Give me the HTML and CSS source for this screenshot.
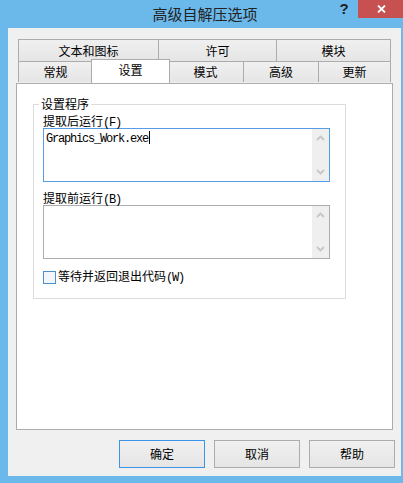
FILE: index.html
```html
<!DOCTYPE html>
<html lang="zh-CN">
<head>
<meta charset="utf-8">
<title>高级自解压选项</title>
<link rel="stylesheet" href="styles.css">
</head>
<body>
<div class="window">
  <div class="titlebar">
    <div class="title">高级自解压选项</div>
    <div class="help">?</div>
    <div class="close">
      <svg width="9" height="8" viewBox="0 0 9 8"><path d="M1 0.5 L8 7.5 M8 0.5 L1 7.5" stroke="#fff" stroke-width="1.8" fill="none"/></svg>
    </div>
  </div>
  <div class="client">
    <div class="tabs">
      <div class="tabrow">
        <div class="tab t-text">文本和图标</div>
        <div class="tab t-license">许可</div>
        <div class="tab t-module">模块</div>
      </div>
      <div class="tabrow">
        <div class="tab t-general">常规</div>
        <div class="tab t-setup active">设置</div>
        <div class="tab t-mode">模式</div>
        <div class="tab t-adv">高级</div>
        <div class="tab t-update">更新</div>
      </div>
    </div>
    <div class="panel">
      <fieldset class="group">
        <legend>设置程序</legend>
        <div class="label">提取后运行<span class="mono">(F)</span></div>
        <div class="textbox focused">
          <div class="textcontent">Graphics_Work.exe<span class="caret"></span></div>
          <div class="scrollbar">
            <svg width="9" height="6" viewBox="0 0 9 6"><polyline points="1,5 4.5,1.5 8,5" stroke="#c6c6c6" stroke-width="1.8" fill="none"/></svg>
            <svg width="9" height="6" viewBox="0 0 9 6"><polyline points="1,1 4.5,4.5 8,1" stroke="#c6c6c6" stroke-width="1.8" fill="none"/></svg>
          </div>
        </div>
        <div class="label label-gap">提取前运行<span class="mono">(B)</span></div>
        <div class="textbox">
          <div class="textcontent"></div>
          <div class="scrollbar">
            <svg width="9" height="6" viewBox="0 0 9 6"><polyline points="1,5 4.5,1.5 8,5" stroke="#c6c6c6" stroke-width="1.8" fill="none"/></svg>
            <svg width="9" height="6" viewBox="0 0 9 6"><polyline points="1,1 4.5,4.5 8,1" stroke="#c6c6c6" stroke-width="1.8" fill="none"/></svg>
          </div>
        </div>
        <div class="check-row">
          <span class="checkbox"></span>
          <span class="check-label">等待并返回退出代码<span class="mono">(W)</span></span>
        </div>
      </fieldset>
    </div>
    <div class="buttons">
      <div class="btn default">确定</div>
      <div class="btn">取消</div>
      <div class="btn">帮助</div>
    </div>
  </div>
</div>
</body>
</html>
```
FILE: styles.css
```css
* { box-sizing: border-box; }
html, body {
  margin: 0;
  padding: 0;
}
body {
  font-family: "Noto Sans CJK SC", "Noto Sans", sans-serif;
  font-size: 12px;
  color: #000;
  background: #6bb9eb;
}
.window {
  width: 403px;
  height: 483px;
  background: #6bb9eb;
  overflow: hidden;
}
.titlebar {
  display: flex;
  align-items: flex-start;
  height: 28px;
}
.title {
  flex: 1;
  padding-left: 80px;
  text-align: center;
  font-size: 15px;
  line-height: 28px;
  color: #222;
}
.help {
  width: 28px;
  height: 18px;
  text-align: center;
  font-family: "Liberation Sans", Arial, sans-serif;
  font-weight: bold;
  font-size: 15px;
  line-height: 17px;
  color: #1e1e1e;
}
.close {
  width: 45px;
  height: 18px;
  background: #c75050;
  display: flex;
  align-items: center;
  justify-content: center;
  padding-left: 1px;
}
.close svg { display: block; }

.client {
  margin-left: 8px;
  width: 393px;
  height: 448px;
  background: #f0f0f0;
  padding: 11px 8px 0 8px;
}
.tabs {
  padding-left: 2px;
}
.tabrow {
  display: flex;
}
.tab {
  border: 1px solid #acacac;
  border-bottom: none;
  background: linear-gradient(#f0f0f0, #e5e5e5);
  text-align: center;
  margin-left: -1px;
  white-space: nowrap;
}
.tab:first-child { margin-left: 0; }
.tabrow:first-child .tab {
  height: 22px;
  line-height: 21px;
}
.tabrow:last-child .tab {
  height: 21px;
  line-height: 20px;
}
.t-text { width: 141px; }
.t-license { width: 119px; }
.t-module { width: 115px; }
.t-general { width: 75px; }
.t-mode { width: 77px; }
.t-adv { width: 76px; }
.t-update { width: 73px; }
.tabrow:last-child .tab.active {
  width: 79px;
  margin-left: -2px;
  margin-right: -2px;
  margin-top: -2px;
  height: 24px;
  line-height: 20px;
  background: #fff;
  position: relative;
  z-index: 2;
}

.panel {
  height: 347px;
  background: #fff;
  border: 1px solid #acacac;
}
.group {
  margin: 13px 0 0 16px;
  width: 313px;
  border: 1px solid #dcdcdc;
  padding: 3px 15px 14px 9px;
}
.group legend {
  margin-left: -4px;
  padding: 0 2px;
  line-height: 14px;
  font-size: 12px;
}
.label {
  line-height: 14px;
  height: 14px;
}
.mono {
  font-family: "Liberation Mono", monospace;
  font-size: 12px;
  letter-spacing: -1.2px;
}
.label-gap { margin-top: 9px; }
.textbox {
  display: flex;
  height: 54px;
  border: 1px solid #abadb3;
  background: #fff;
}
.textbox.focused { border-color: #569de5; }
.textcontent {
  flex: 1;
  padding: 2px 2px;
  font-family: "Liberation Mono", monospace;
  font-size: 12px;
  letter-spacing: -1.2px;
  line-height: 15px;
  color: #000;
}
.caret {
  display: inline-block;
  width: 1px;
  height: 13px;
  background: #000;
  vertical-align: -2px;
  margin-left: 1px;
}
.scrollbar {
  width: 17px;
  background: #efefef;
  display: flex;
  flex-direction: column;
  align-items: center;
  justify-content: space-between;
  padding: 6px 0 6px 0;
}
.scrollbar svg { display: block; }
.check-row {
  margin-top: 11px;
  display: flex;
  align-items: center;
  height: 14px;
}
.checkbox {
  width: 13px;
  height: 13px;
  border: 1px solid #4d8fcf;
  background: #f3f7fb;
  margin-right: 2px;
}
.check-label {
  line-height: 14px;
}

.buttons {
  display: flex;
  justify-content: flex-end;
  gap: 9px;
  margin-top: 10px;
  margin-right: -2px;
}
.btn {
  width: 86px;
  height: 28px;
  border: 1px solid #acacac;
  background: linear-gradient(#f0f0f0, #e5e5e5);
  text-align: center;
  line-height: 26px;
}
.btn.default { border-color: #3c93ea; }
```
